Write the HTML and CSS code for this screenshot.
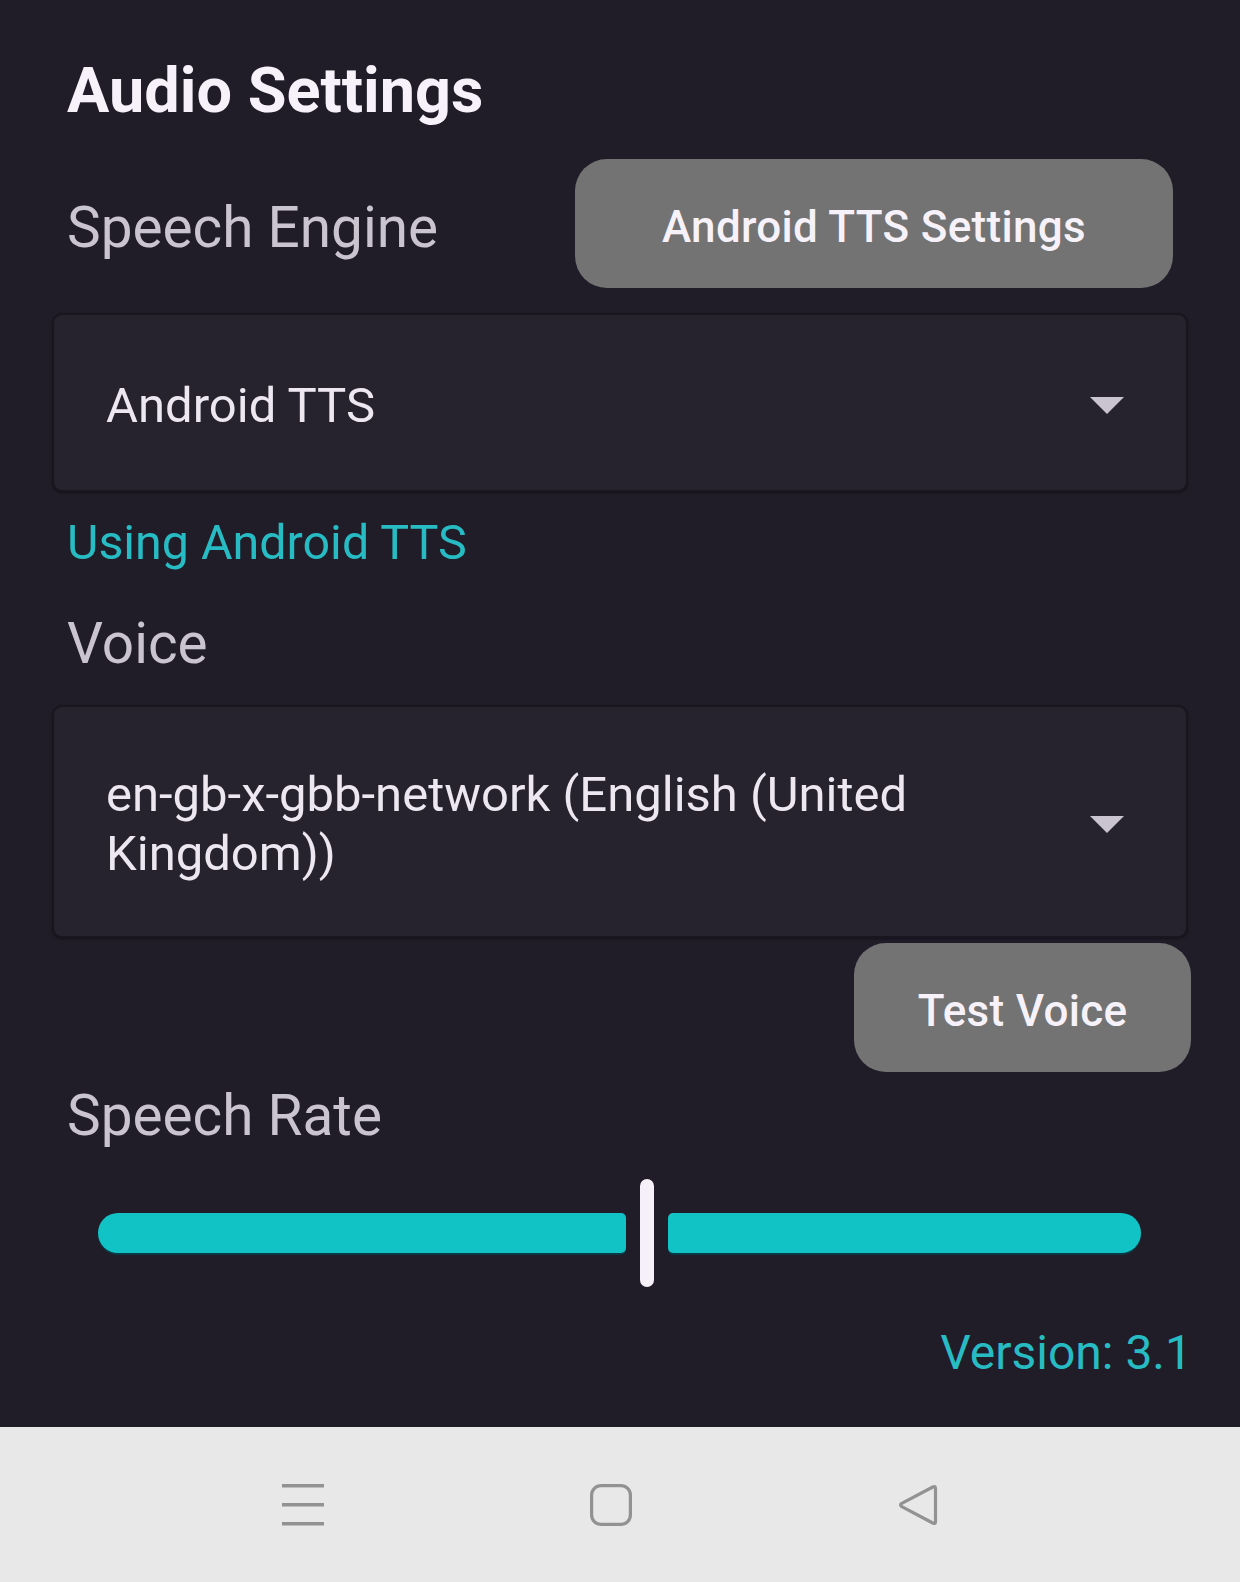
FILE: index.html
```html
<!DOCTYPE html>
<html lang="en">
<head>
<meta charset="utf-8">
<title>Audio Settings</title>
<link rel="stylesheet" href="styles.css">
</head>
<body>
<div class="screen">
  <main class="content">
    <h1 class="title">Audio Settings</h1>

    <div class="engine-row">
      <span class="label label-engine">Speech Engine</span>
      <button class="pill-btn btn-tts">Android TTS Settings</button>
    </div>

    <div class="dropdown dropdown-engine">
      <span class="dropdown-text">Android TTS</span>
      <span class="caret"></span>
    </div>

    <p class="status">Using Android TTS</p>

    <p class="label label-voice">Voice</p>

    <div class="dropdown dropdown-voice">
      <span class="dropdown-text">en-gb-x-gbb-network (English (United Kingdom))</span>
      <span class="caret"></span>
    </div>

    <button class="pill-btn btn-test">Test Voice</button>

    <p class="label label-rate">Speech Rate</p>

    <div class="slider">
      <span class="track track-left"></span>
      <span class="thumb"></span>
      <span class="track track-right"></span>
    </div>

    <p class="version">Version: 3.1</p>
  </main>

  <nav class="navbar">
    <span class="nav-icon nav-menu">
      <svg width="42" height="42" viewBox="0 0 42 42"><path d="M0 1.7H42M0 20.7H42M0 39.7H42" stroke="#929292" stroke-width="3.4" fill="none"/></svg>
    </span>
    <span class="nav-icon nav-home">
      <svg width="42" height="42" viewBox="0 0 42 42"><rect x="1.6" y="1.6" width="38.8" height="38.8" rx="9.5" ry="9.5" stroke="#929292" stroke-width="3.2" fill="none"/></svg>
    </span>
    <span class="nav-icon nav-back">
      <svg width="42" height="42" viewBox="0 0 42 42"><path d="M37.5 4.5 V37.5 Q37.5 40.5 34.8 39 L3.8 22.6 Q1.3 21 3.8 19.4 L34.8 3 Q37.5 1.5 37.5 4.5 Z" stroke="#929292" stroke-width="3.2" fill="none" stroke-linejoin="round"/></svg>
    </span>
  </nav>
</div>
</body>
</html>
```

FILE: styles.css
```css
html, body {
  margin: 0;
  padding: 0;
}

body {
  width: 1240px;
  height: 1582px;
  overflow: hidden;
  font-family: Roboto, "Noto Sans", "Liberation Sans", sans-serif;
  background: #201c28;
}

.screen {
  display: flex;
  flex-direction: column;
  height: 1582px;
}

.content {
  height: 1427px;
  box-sizing: border-box;
  padding: 53px 52px 0 52px;
  display: flex;
  flex-direction: column;
  background: #201c28;
}

.title {
  margin: 0;
  padding-left: 15px;
  font-size: 63px;
  line-height: 76px;
  font-weight: 700;
  color: #f7f2fa;
  letter-spacing: 0;
}

.engine-row {
  margin-top: 30px;
  display: flex;
  align-items: center;
  justify-content: space-between;
  height: 129px;
}

.label {
  margin: 0;
  font-size: 56.7px;
  line-height: 66px;
  font-weight: 400;
  color: #cac4d0;
  padding-left: 15px;
}

.label-engine {
  padding-top: 8px;
}

.pill-btn {
  border: none;
  background: #737373;
  color: #f7f2fa;
  font-family: Roboto, "Noto Sans", "Liberation Sans", sans-serif;
  font-size: 44px;
  font-weight: 500;
  letter-spacing: 0.3px;
  height: 129px;
  border-radius: 32px;
  padding: 6px 0 0 0;
  display: flex;
  align-items: center;
  justify-content: center;
}

.btn-tts {
  width: 598px;
  margin-right: 15px;
}

.dropdown {
  box-sizing: border-box;
  display: flex;
  align-items: center;
  gap: 20px;
  background: #26232f;
  border: 2px solid #18161e;
  border-radius: 10px;
  padding: 5px 62px 0 52px;
  box-shadow: 0 1px 2px rgba(0, 0, 0, 0.35);
}

.dropdown-engine {
  margin-top: 25px;
  height: 179px;
}

.dropdown-voice {
  margin-top: 28px;
  height: 233px;
}

.dropdown-text {
  flex: 1;
  font-size: 49px;
  line-height: 59px;
  color: #ece7f1;
}

.caret {
  width: 0;
  height: 0;
  border-left: 17px solid transparent;
  border-right: 17px solid transparent;
  border-top: 17px solid #cac4d0;
  flex: none;
}

.status {
  margin: 22px 0 0 0;
  padding-left: 15px;
  font-size: 48.4px;
  line-height: 58px;
  color: #27bcc4;
}

.label-voice {
  margin-top: 39px;
}

.btn-test {
  align-self: flex-end;
  margin-top: 5px;
  margin-right: -3px;
  width: 337px;
}

.label-rate {
  margin-top: 11px;
}

.slider {
  margin-top: 30px;
  height: 108px;
  display: flex;
  align-items: center;
  padding: 0 47px 0 46px;
}

.track {
  height: 40px;
  background: #12c3c6;
  box-shadow: 0 2px 1px #0b3a44;
}

.track-left {
  width: 528px;
  border-radius: 20px 5px 5px 20px;
}

.track-right {
  flex: 1;
  border-radius: 5px 20px 20px 5px;
}

.thumb {
  width: 14px;
  height: 108px;
  margin: 0 14px;
  border-radius: 7px;
  background: #f6f1f9;
}

.version {
  margin: 37px -4px 0 0;
  text-align: right;
  font-size: 48px;
  line-height: 58px;
  color: #27bcc4;
}

.navbar {
  height: 155px;
  background: #e8e8e8;
  display: flex;
  align-items: center;
  padding-left: 282px;
  gap: 267px;
}

.nav-icon {
  display: block;
  width: 42px;
  height: 42px;
}

.nav-icon svg {
  display: block;
}

.nav-home {
  margin-left: -1px;
}

.nav-back {
  margin-left: -1px;
}
```
